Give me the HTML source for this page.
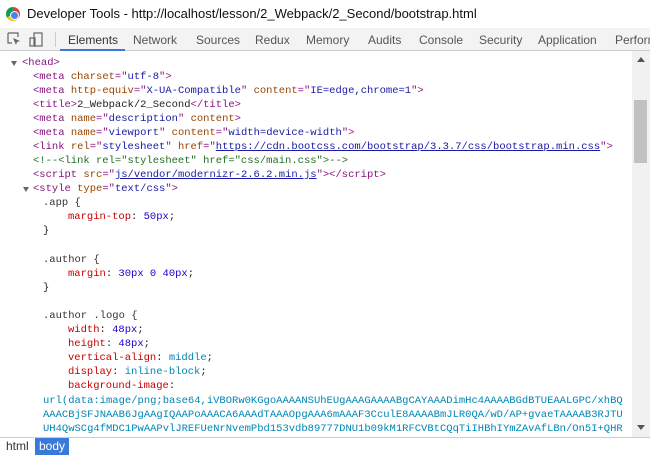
<!DOCTYPE html>
<html><head><meta charset="utf-8">
<style>
*{margin:0;padding:0;box-sizing:border-box}
body{width:650px;height:455px;overflow:hidden;background:#fff;position:relative;font-family:"Liberation Sans",sans-serif}
.title{position:absolute;left:0;top:0;width:650px;height:28px;background:#fff}
.title span{position:absolute;left:27px;top:6px;font-size:13px;color:#111}
.chrome{position:absolute;left:6px;top:7px;width:14px;height:14px;border-radius:50%;background:conic-gradient(#db4437 0 120deg,#f4c20d 120deg 240deg,#0f9d58 240deg 360deg)}
.chrome:after{content:"";position:absolute;left:3.5px;top:3.5px;width:7px;height:7px;border-radius:50%;background:#4285f4;border:1px solid #fff}
.tabs{position:absolute;left:0;top:28px;width:650px;height:23px;background:#f3f3f3;border-bottom:1px solid #ccc}
.tabs .t{position:absolute;top:5px;font-size:12px;color:#555}
.tabs .sel{color:#333}
.ul{position:absolute;left:60px;top:21px;width:65px;height:2px;background:#3879d9}
.code{position:absolute;left:0;top:53px;width:632px;height:384px;overflow:hidden;font-family:"Liberation Mono",monospace;font-size:10.5px;color:#222}
.l{position:absolute;white-space:pre;line-height:14px}
.tg{color:#881280}.an{color:#994500}.av{color:#1a1aa6}.lk{color:#1a1aa6;text-decoration:underline}
.cm{color:#236e25}.pr{color:#c80000}.nm{color:#1c00cf}.kw{color:#0086b3}.sel2{color:#333}
.tri{position:absolute;width:0;height:0;border-left:3px solid transparent;border-right:3px solid transparent;border-top:5px solid #666}
.sb{position:absolute;left:632px;top:51px;width:18px;height:386px;background:#f1f1f1}
.thumb{position:absolute;left:634px;top:100px;width:13px;height:63px;background:#c1c1c1}
.bot{position:absolute;left:0;top:437px;width:650px;height:18px;background:#fff;border-top:1px solid #ccc;font-size:12px}
</style></head><body>
<div class="title"><div class="chrome"></div><span>Developer Tools - http://localhost/lesson/2_Webpack/2_Second/bootstrap.html</span></div>
<div class="tabs">
<svg style="position:absolute;left:7px;top:4px" width="14" height="14" viewBox="0 0 14 14"><path d="M1 1h10v4M1 1v10h4" fill="none" stroke="#666" stroke-width="1.2"/><path d="M6 6l7 3-3 1-1 3z" fill="#666"/></svg>
<svg style="position:absolute;left:29px;top:4px" width="14" height="15" viewBox="0 0 14 15"><rect x="5" y="1" width="8" height="13" fill="none" stroke="#666" stroke-width="1.2"/><rect x="1" y="6" width="5" height="8" fill="none" stroke="#666" stroke-width="1.2"/></svg>
<div style="position:absolute;left:55px;top:4px;width:1px;height:15px;background:#ccc"></div>
<span class="t sel" style="left:68px">Elements</span>
<span class="t" style="left:133px">Network</span>
<span class="t" style="left:196px">Sources</span>
<span class="t" style="left:255px">Redux</span>
<span class="t" style="left:306px">Memory</span>
<span class="t" style="left:368px">Audits</span>
<span class="t" style="left:419px">Console</span>
<span class="t" style="left:479px">Security</span>
<span class="t" style="left:538px">Application</span>
<span class="t" style="left:615px">Perform</span>
<div class="ul"></div>
</div>
<div class="code">
<div class="tri" style="left:11px;top:8px"></div>
<div class="l" style="left:22px;top:3px"><span class="tg">&lt;head&gt;</span></div>
<div class="l" style="left:33px;top:17px"><span class="tg">&lt;meta </span><span class="an">charset</span><span class="tg">="</span><span class="av">utf-8</span><span class="tg">"&gt;</span></div>
<div class="l" style="left:33px;top:31px"><span class="tg">&lt;meta </span><span class="an">http-equiv</span><span class="tg">="</span><span class="av">X-UA-Compatible</span><span class="tg">" </span><span class="an">content</span><span class="tg">="</span><span class="av">IE=edge,chrome=1</span><span class="tg">"&gt;</span></div>
<div class="l" style="left:33px;top:45px"><span class="tg">&lt;title&gt;</span>2_Webpack/2_Second<span class="tg">&lt;/title&gt;</span></div>
<div class="l" style="left:33px;top:59px"><span class="tg">&lt;meta </span><span class="an">name</span><span class="tg">="</span><span class="av">description</span><span class="tg">" </span><span class="an">content</span><span class="tg">&gt;</span></div>
<div class="l" style="left:33px;top:73px"><span class="tg">&lt;meta </span><span class="an">name</span><span class="tg">="</span><span class="av">viewport</span><span class="tg">" </span><span class="an">content</span><span class="tg">="</span><span class="av">width=device-width</span><span class="tg">"&gt;</span></div>
<div class="l" style="left:33px;top:87px"><span class="tg">&lt;link </span><span class="an">rel</span><span class="tg">="</span><span class="av">stylesheet</span><span class="tg">" </span><span class="an">href</span><span class="tg">="</span><span class="lk">https://cdn.bootcss.com/bootstrap/3.3.7/css/bootstrap.min.css</span><span class="tg">"&gt;</span></div>
<div class="l" style="left:33px;top:101px"><span class="cm">&lt;!--&lt;link rel="stylesheet" href="css/main.css"&gt;--&gt;</span></div>
<div class="l" style="left:33px;top:115px"><span class="tg">&lt;script </span><span class="an">src</span><span class="tg">="</span><span class="lk">js/vendor/modernizr-2.6.2.min.js</span><span class="tg">"&gt;&lt;/script&gt;</span></div>
<div class="tri" style="left:23px;top:134px"></div>
<div class="l" style="left:33px;top:129px"><span class="tg">&lt;style </span><span class="an">type</span><span class="tg">="</span><span class="av">text/css</span><span class="tg">"&gt;</span></div>
<div class="l sel2" style="left:43px;top:143px">.app {</div>
<div class="l" style="left:68px;top:157px"><span class="pr">margin-top</span>: <span class="nm">50px</span>;</div>
<div class="l" style="left:43px;top:171px">}</div>
<div class="l sel2" style="left:43px;top:200px">.author {</div>
<div class="l" style="left:68px;top:214px"><span class="pr">margin</span>: <span class="nm">30px 0 40px</span>;</div>
<div class="l" style="left:43px;top:228px">}</div>
<div class="l sel2" style="left:43px;top:256px">.author .logo {</div>
<div class="l" style="left:68px;top:270px"><span class="pr">width</span>: <span class="nm">48px</span>;</div>
<div class="l" style="left:68px;top:284px"><span class="pr">height</span>: <span class="nm">48px</span>;</div>
<div class="l" style="left:68px;top:298px"><span class="pr">vertical-align</span>: <span class="kw">middle</span>;</div>
<div class="l" style="left:68px;top:312px"><span class="pr">display</span>: <span class="kw">inline-block</span>;</div>
<div class="l" style="left:68px;top:326px"><span class="pr">background-image</span>:</div>
<div class="l kw" style="left:43px;top:341px">url(data:image/png;base64,iVBORw0KGgoAAAANSUhEUgAAAGAAAABgCAYAAADimHc4AAAABGdBTUEAALGPC/xhBQ</div>
<div class="l kw" style="left:43px;top:355px">AAACBjSFJNAAB6JgAAgIQAAPoAAACA6AAAdTAAAOpgAAA6mAAAF3CculE8AAAABmJLR0QA/wD/AP+gvaeTAAAAB3RJTU</div>
<div class="l kw" style="left:43px;top:369px">UH4QwSCg4fMDC1PwAAPvlJREFUeNrNvemPbd153vdb89777DNU1b09kM1RFCVBtCQqTiIHBhIYmZAvAfLBn/On5I+QHR</div>
<div class="l kw" style="left:43px;top:383px">swqtgJEsOxEsRWEDtSIIdvLE+vRA1skiK7mz3focYz7GFN+bDWOWW3m1NTkq0D1L236lbVOWe9a73D8z7RuwSQ+YR6EE</div>
</div>
<div class="sb"><svg style="position:absolute;left:5px;top:6px" width="8" height="5"><path d="M0 5L4 0 8 5z" fill="#555"/></svg><svg style="position:absolute;left:5px;top:374px" width="8" height="5"><path d="M0 0L4 5 8 0z" fill="#555"/></svg></div>
<div class="thumb"></div>
<div class="bot"><span style="position:absolute;left:6px;top:1px;color:#333">html</span><span style="position:absolute;left:35px;top:0;height:17px;padding:1px 4px;background:#3879d9;color:#fff">body</span></div>
</body></html>
